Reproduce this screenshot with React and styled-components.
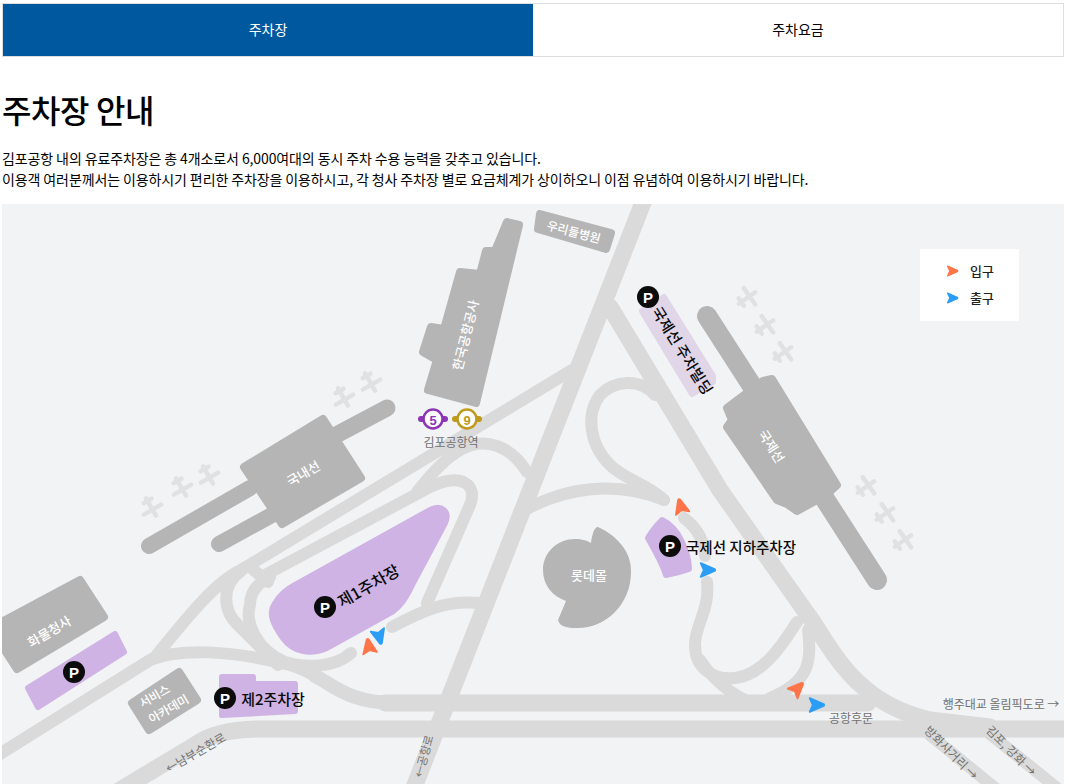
import styled, { createGlobalStyle } from "styled-components";

const FONT = `"Noto Sans CJK KR", "Noto Sans", sans-serif`;

const GlobalStyle = createGlobalStyle`
    html, body {
        margin: 0;
        padding: 0;
        background: #fff;
        overflow: hidden;
    }
    body {
        font-family: ${FONT};
        color: #000;
    }
`;

const MAIN_ROADS = [
    "M644 200 L413 790",
    "M610 307 L720 490 L815 625 C840 665 865 705 930 720 L990 727",
    "M385 703 L868 703",
    "M120 790 L195 745 C212 733 235 729 260 729 L1075 729",
];

const MID_ROADS = [
    "M315 676 C335 686 350 703 395 703",
];

const SMALL_ROADS = [
    "M-5 757 L155 657 C185 620 215 582 241 570 L572 370",
    "M-5 757 L150 660 C180 648 230 650 290 665 C300 668 308 672 315 676",
    "M265 575 L430 487 C462 472 478 485 470 505 L427 603",
    "M250 567 L268 582",
    "M392 627 C420 612 445 600 478 603",
    "M351 653 C335 668 305 668 285 662 C255 650 245 620 250 605 C250 590 260 582 270 577",
    "M240 572 C222 585 222 610 238 625 L278 665",
    "M417 492 C430 475 445 458 462 449 C485 437 510 445 527 472",
    "M664 500 C650 485 625 480 610 465 C590 445 585 415 600 395 C615 380 640 378 655 395",
    "M525 510 C565 488 615 480 664 500",
    "M684 518 C700 530 705 545 705 556",
    "M707 582 C710 610 695 625 695 645 C695 670 715 680 735 678 C765 675 785 640 797 622",
    "M700 660 C712 678 725 690 745 700",
    "M808 630 C812 660 810 682 770 698",
    "M930 735 L1000 792",
    "M985 730 L1062 792",
];

const BUILDINGS = [
    "507,222 519,225 476,403 428,390 437,360 423,352 431,327 444,329 460,272 480,274 486,251 495,251",
    "323,419 361,478 282,524 244,467",
    "80,580 104,617 17,669 6,652 -4,625",
    "179,672 197,700 149,730 132,703",
    "540,214 611,233 606,249 538,229",
    "763,381 772,379 837,485 826,495 797,511 787,504 777,500 727,427 732,420 727,408",
];

const BUILDING_LINES = [
    { d: "M338 434 L387 408", w: 17 },
    { d: "M149 546 L250 488", w: 16 },
    { d: "M219 544 L290 505", w: 16 },
    { d: "M707 316 L877 580", w: 20 },
];

const PLANES = [
    [370, 382, -30], [343, 397, -30], [208, 475, -30], [181, 487, -30], [151, 507, -30],
    [747, 298, -125], [765, 326, -125], [783, 353, -125], [866, 487, -125], [885, 514, -125], [903, 541, -125],
];

const PINS = [
    [648, 297], [74, 672], [325, 607], [225, 698], [670, 546],
];

const ENTRANCES = [
    [369, 647, -100], [681, 507, -105], [797, 689, -45],
];

const EXITS = [
    [379, 636, 75], [707, 570, 0], [816, 705, 0],
];

const LABELS = [
    { x: 465, y: 335, r: -76, t: "한국공항공사", tone: "light", s: 13 },
    { x: 574, y: 231, r: 15, t: "우리들병원", tone: "light", s: 12 },
    { x: 303, y: 473, r: -30, t: "국내선", tone: "light", s: 13 },
    { x: 772, y: 446, r: 58, t: "국제선", tone: "light", s: 13 },
    { x: 49, y: 631, r: -30, t: "화물청사", tone: "light", s: 13 },
    { x: 589, y: 574, r: 0, t: "롯데몰", tone: "light", s: 13 },
    { x: 154, y: 695, r: -30, t: "서비스", tone: "light", s: 12 },
    { x: 168, y: 708, r: -30, t: "아카데미", tone: "light", s: 12 },
    { x: 683, y: 350, r: 58, t: "국제선 주차빌딩", tone: "dark", s: 15 },
    { x: 368, y: 585, r: -30, t: "제1주차장", tone: "dark", s: 16 },
    { x: 273, y: 698, r: 0, t: "제2주차장", tone: "dark", s: 15 },
    { x: 741, y: 546, r: 0, t: "국제선 지하주차장", tone: "dark", s: 14.5 },
    { x: 451, y: 441, r: 0, t: "김포공항역", tone: "gray", s: 12 },
    { x: 423, y: 756, r: -75, t: "←공항로", tone: "gray", s: 11.5 },
    { x: 195, y: 752, r: -30, t: "←남부순환로", tone: "gray", s: 12 },
    { x: 851, y: 717, r: 0, t: "공항후문", tone: "gray", s: 12 },
    { x: 1001, y: 703, r: 0, t: "행주대교 올림픽도로 →", tone: "gray", s: 12 },
    { x: 952, y: 752, r: 45, t: "방화사거리 →", tone: "gray", s: 12 },
    { x: 1012, y: 750, r: 45, t: "김포, 강화 →", tone: "gray", s: 12 },
];

const ARROW = "M-5 -5.5 L6 -0.8 Q7 0 6 0.8 L-5 5.5 L-2.5 0 Z";

function Arrow({ x, y, r, color }) {
    return <ArrowShape d={ARROW} $color={color} transform={`translate(${x} ${y}) rotate(${r}) scale(1.25)`} />;
}

function Plane({ x, y, r }) {
    return (
        <g transform={`translate(${x} ${y}) rotate(${r})`}>
            <PlaneLine d="M0 -10 L0 10" />
            <PlaneLine d="M-10 3 L10 3" />
            <PlaneLine d="M-4.5 -7 L4.5 -7" />
        </g>
    );
}

function Pin({ x, y }) {
    return (
        <g>
            <circle cx={x} cy={y} r="11" fill="#0c0c0c" />
            <PinText x={x} y={y}>P</PinText>
        </g>
    );
}

function Metro({ x, color, n }) {
    return (
        <g>
            <path d={`M${x - 12} 419 L${x + 12} 419`} stroke={color} strokeWidth="6" strokeLinecap="round" />
            <circle cx={x} cy="419" r="9.5" fill="#fff" stroke={color} strokeWidth="2.5" />
            <MetroText x={x} y="420" fill={color}>{n}</MetroText>
        </g>
    );
}

function MapDrawing() {
    return (
        <MapSvg viewBox="2 204 1062 580">
            {SMALL_ROADS.map((d) => <Road d={d} $w={12} key={d} />)}
            {MID_ROADS.map((d) => <Road d={d} $w={14} key={d} />)}
            {MAIN_ROADS.map((d) => <Road d={d} $w={17} key={d} />)}
            <Lot $pale as="polygon" points="664,297 713,376 713,382 692,394 646,318 642,311" />
            <Lot d="M430 510 C442 504 450 512 445 523 L413 583 C405 600 400 606 392 612 L327 648 C310 655 293 652 283 638 C272 623 268 612 276 602 C280 595 286 590 293 586 Z" />
            <Lot as="polygon" points="28,688 115,634 124,652 38,707" />
            <Lot as="polygon" points="222,677 253,677 253,684 295,684 295,711 222,715" />
            <Lot d="M662 520 C668 523 676 530 681 540 C686 550 689 560 689 569 C680 572 672 574 666 575 C662 562 654 549 648 538 C652 531 657 525 662 520 Z" />
            {BUILDINGS.map((p) => <Building points={p} key={p} />)}
            {BUILDING_LINES.map((b) => <BuildingLine d={b.d} strokeWidth={b.w} key={b.d} />)}
            <BuildingShape d="M598 527 C620 537 632 555 631 572 C631 605 605 628 578 628 C570 628 560 628 558 620 L566 601 C552 596 543 585 543 570 C543 552 558 539 575 539 C582 539 588 541 591 543 C592 535 594 527 598 527 Z" />
            {PLANES.map(([x, y, r]) => <Plane x={x} y={y} r={r} key={`${x}-${y}`} />)}
            {ENTRANCES.map(([x, y, r]) => <Arrow x={x} y={y} r={r} color="#ff7448" key={`${x}-${y}`} />)}
            {EXITS.map(([x, y, r]) => <Arrow x={x} y={y} r={r} color="#2b9df4" key={`${x}-${y}`} />)}
            {PINS.map(([x, y]) => <Pin x={x} y={y} key={x} />)}
            <Metro x={433} color="#8c35b5" n="5" />
            <Metro x={467} color="#bf9a1c" n="9" />
            {LABELS.map((l) => (
                <MapLabel
                    key={l.t}
                    $tone={l.tone}
                    fontSize={l.s}
                    transform={`translate(${l.x} ${l.y}) rotate(${l.r})`}
                >
                    {l.t}
                </MapLabel>
            ))}
        </MapSvg>
    );
}

export default function App() {
    return (
        <>
            <GlobalStyle />
            <Page>
                <Tabs>
                    <Tab $active>주차장</Tab>
                    <Tab>주차요금</Tab>
                </Tabs>
                <Title>주차장 안내</Title>
                <Intro>
                    김포공항 내의 유료주차장은 총 4개소로서 6,000여대의 동시 주차 수용 능력을 갖추고 있습니다.<br />
                    이용객 여러분께서는 이용하시기 편리한 주차장을 이용하시고, 각 청사 주차장 별로 요금체계가 상이하오니 이점 유념하여 이용하시기 바랍니다.
                </Intro>
                <MapBox>
                    <MapDrawing />
                    <Legend>
                        <LegendRow>
                            <svg width="14" height="14" viewBox="-8 -8 16 16"><ArrowShape d={ARROW} $color="#ff7448" /></svg>
                            입구
                        </LegendRow>
                        <LegendRow>
                            <svg width="14" height="14" viewBox="-8 -8 16 16"><ArrowShape d={ARROW} $color="#2b9df4" /></svg>
                            출구
                        </LegendRow>
                    </Legend>
                </MapBox>
            </Page>
        </>
    );
}

const Page = styled.div`
    width: 1062px;
    margin-left: 2px;
    padding-top: 3px;
`;

const Tabs = styled.div`
    display: flex;
    height: 52px;
    border: 1px solid #dedede;
`;

const Tab = styled.div`
    flex: 1;
    display: flex;
    align-items: center;
    justify-content: center;
    padding-bottom: 2px;
    font-size: 14px;
    font-weight: 400;
    background: ${(p) => (p.$active ? "#00589f" : "#fff")};
    color: ${(p) => (p.$active ? "#fff" : "#000")};
`;

const Title = styled.h1`
    margin: 29px 0 0;
    font-size: 32px;
    line-height: 46px;
    font-weight: 500;
    letter-spacing: -0.4px;
`;

const Intro = styled.p`
    margin: 16px 0 0;
    font-size: 14px;
    line-height: 21px;
    height: 56px;
    letter-spacing: -0.11px;
`;

const MapBox = styled.div`
    position: relative;
    height: 580px;
    background: #f1f3f5;
    overflow: hidden;
`;

const MapSvg = styled.svg`
    display: block;
    width: 1062px;
    height: 580px;
`;

const Road = styled.path`
    fill: none;
    stroke: #dadada;
    stroke-width: ${(p) => p.$w}px;
    stroke-linecap: round;
    stroke-linejoin: round;
`;

const Lot = styled.path`
    fill: ${(p) => (p.$pale ? "#e0d6e8" : "#cfb3e5")};
    stroke: ${(p) => (p.$pale ? "#e0d6e8" : "#cfb3e5")};
    stroke-width: 6px;
    stroke-linejoin: round;
`;

const Building = styled.polygon`
    fill: #b5b5b5;
    stroke: #b5b5b5;
    stroke-width: 8px;
    stroke-linejoin: round;
`;

const BuildingShape = styled.path`
    fill: #b5b5b5;
`;

const BuildingLine = styled.path`
    fill: none;
    stroke: #b5b5b5;
    stroke-linecap: round;
`;

const PlaneLine = styled.path`
    fill: none;
    stroke: #e0e1e3;
    stroke-width: 4.5px;
    stroke-linecap: round;
`;

const ArrowShape = styled.path`
    fill: ${(p) => p.$color};
    stroke: ${(p) => p.$color};
    stroke-width: 1.5px;
    stroke-linejoin: round;
`;

const PinText = styled.text`
    fill: #fff;
    font-family: "Liberation Sans", sans-serif;
    font-size: 15px;
    font-weight: 700;
    text-anchor: middle;
    dominant-baseline: central;
`;

const MetroText = styled.text`
    font-family: "Liberation Sans", sans-serif;
    font-size: 13px;
    font-weight: 700;
    text-anchor: middle;
    dominant-baseline: central;
`;

const toneColor = { light: "#fff", dark: "#0a0a0a", gray: "#707070" };

const MapLabel = styled.text`
    fill: ${(p) => toneColor[p.$tone]};
    font-family: ${FONT};
    font-weight: ${(p) => (p.$tone === "gray" ? 400 : 500)};
    text-anchor: middle;
    dominant-baseline: central;
`;

const Legend = styled.div`
    position: absolute;
    left: 918px;
    top: 45px;
    width: 99px;
    height: 72px;
    box-sizing: border-box;
    padding-top: 8px;
    background: #fff;
`;

const LegendRow = styled.div`
    display: flex;
    align-items: center;
    gap: 11px;
    height: 27px;
    padding-left: 25px;
    font-size: 13px;
    font-weight: 500;
    color: #222;
`;
